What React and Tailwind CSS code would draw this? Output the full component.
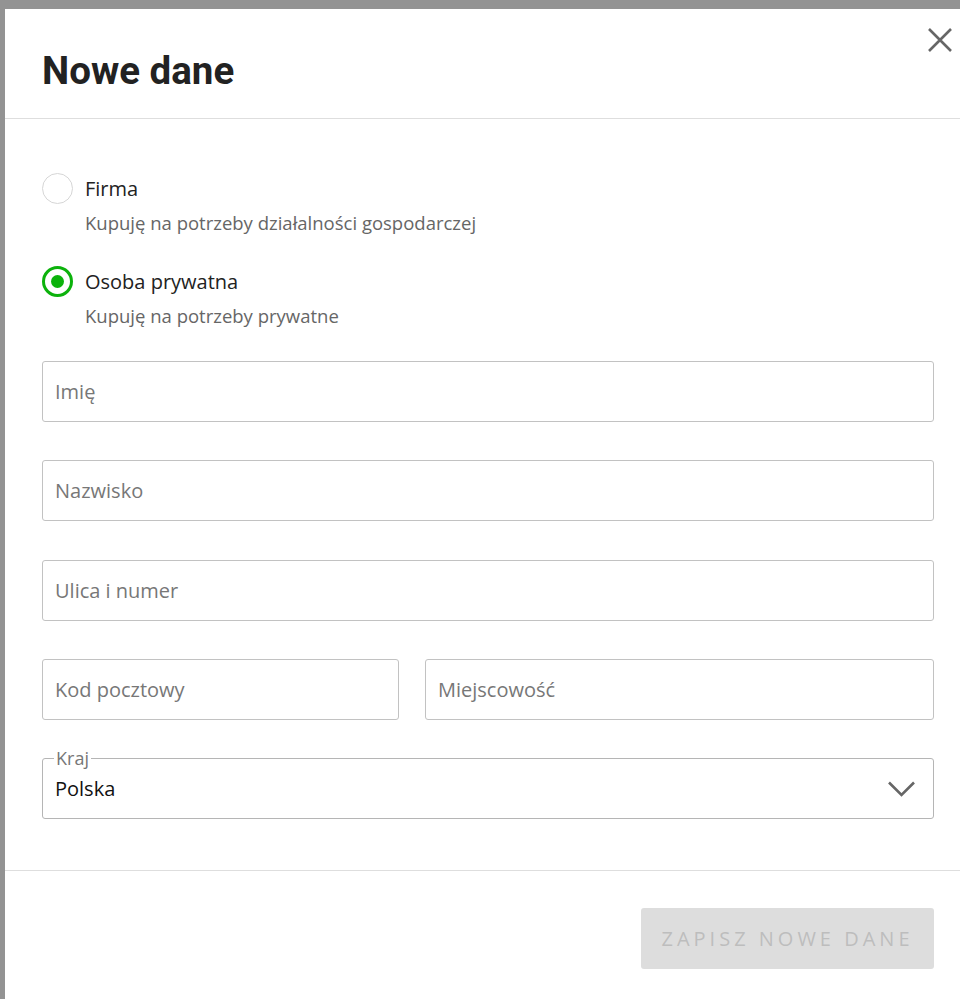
import { useState } from "react";

const sans = { fontFamily: "'Open Sans', 'Noto Sans', sans-serif" };

const TextField = ({ placeholder, className = "" }) => (
  <input
    type="text"
    placeholder={placeholder}
    className={`h-[61px] w-full rounded-[3px] border border-[#c2c2c2] bg-white px-[12px] text-[20px] text-[#222] placeholder:text-[#777] outline-none ${className}`}
    style={sans}
  />
);

const Radio = ({ checked, label, hint, onClick }) => (
  <div className="cursor-pointer" onClick={onClick}>
    <div className="flex items-center gap-[12px]">
      {checked ? (
        <span className="flex h-[31px] w-[31px] items-center justify-center rounded-full border-[3px] border-[#0cb20c]">
          <span className="h-[13px] w-[13px] rounded-full bg-[#0cb20c]" />
        </span>
      ) : (
        <span className="h-[31px] w-[31px] rounded-full border-[1.5px] border-[#d6d6d6]" />
      )}
      <span className="text-[20px] leading-[30px] text-[#222]">{label}</span>
    </div>
    <p className="mt-[7px] pl-[43px] text-[18.5px] leading-[24px] text-[#666]">{hint}</p>
  </div>
);

export default function App() {
  const [kind, setKind] = useState("private");

  return (
    <div className="h-[999px] w-[960px] overflow-hidden bg-[#939393] pl-[5px] pt-[9px]" style={sans}>
      <div className="relative w-[966px] bg-white">
        {/* Header */}
        <div className="flex h-[110px] items-center border-b border-[#dedede] px-[37px] pt-[15px]">
          <h1
            className="text-[38.5px] font-bold text-[#222]"
            style={{ fontFamily: "Roboto, 'Liberation Sans', sans-serif" }}
          >
            Nowe dane
          </h1>
        </div>
        <button className="absolute left-[923px] top-[19px] p-0 text-[#666]">
          <svg width="24" height="24" viewBox="0 0 24 24" fill="none" stroke="currentColor" strokeWidth="2.6">
            <path d="M1 1L23 23M23 1L1 23" />
          </svg>
        </button>

        {/* Body */}
        <div className="px-[37px] pb-[51px] pt-[54px]">
          <div className="flex flex-col gap-[31px]">
            <Radio
              checked={kind === "company"}
              label="Firma"
              hint="Kupuję na potrzeby działalności gospodarczej"
              onClick={() => setKind("company")}
            />
            <Radio
              checked={kind === "private"}
              label="Osoba prywatna"
              hint="Kupuję na potrzeby prywatne"
              onClick={() => setKind("private")}
            />
          </div>

          <div className="mt-[33px] flex w-[892px] flex-col gap-[38.3px]">
            <TextField placeholder="Imię" />
            <TextField placeholder="Nazwisko" />
            <TextField placeholder="Ulica i numer" />
            <div className="flex gap-[26px]">
              <div className="w-[357px]">
                <TextField placeholder="Kod pocztowy" />
              </div>
              <div className="flex-1">
                <TextField placeholder="Miejscowość" />
              </div>
            </div>
            <fieldset className="-mt-[10px] rounded-[3px] border border-[#b5b5b5] px-[12px]">
              <legend className="-ml-[1px] px-[2px] text-[18px] leading-[20px] text-[#777]">Kraj</legend>
              <div className="flex h-[50px] items-center justify-between pb-[8px]">
                <span className="text-[20px] text-[#111]">Polska</span>
                <svg width="27" height="16" viewBox="0 0 27 16" fill="none" stroke="#666" strokeWidth="2.6" className="mr-[6px]">
                  <path d="M1 1.5L13.5 14L26 1.5" />
                </svg>
              </div>
            </fieldset>
          </div>
        </div>

        {/* Footer */}
        <div className="border-t border-[#dedede] px-[37px] pt-[37px]">
          <div className="flex w-[892px] justify-end">
            <button
              disabled
              className="h-[61px] w-[293px] rounded-[3px] bg-[#dddddd] text-[20px] uppercase tracking-[4px] text-[#bdbdbd]"
            >
              Zapisz nowe dane
            </button>
          </div>
          <div className="h-[40px]" />
        </div>
      </div>
    </div>
  );
}
